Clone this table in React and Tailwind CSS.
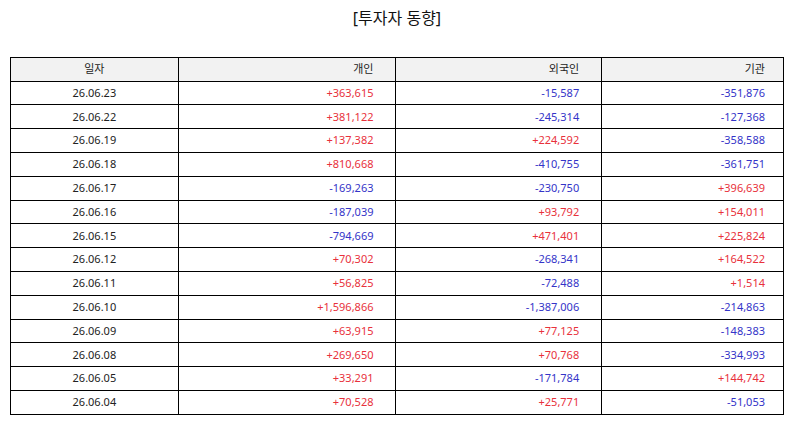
import React from "react";

const rows = [
  ["26.06.23", "+363,615", "-15,587", "-351,876"],
  ["26.06.22", "+381,122", "-245,314", "-127,368"],
  ["26.06.19", "+137,382", "+224,592", "-358,588"],
  ["26.06.18", "+810,668", "-410,755", "-361,751"],
  ["26.06.17", "-169,263", "-230,750", "+396,639"],
  ["26.06.16", "-187,039", "+93,792", "+154,011"],
  ["26.06.15", "-794,669", "+471,401", "+225,824"],
  ["26.06.12", "+70,302", "-268,341", "+164,522"],
  ["26.06.11", "+56,825", "-72,488", "+1,514"],
  ["26.06.10", "+1,596,866", "-1,387,006", "-214,863"],
  ["26.06.09", "+63,915", "+77,125", "-148,383"],
  ["26.06.08", "+269,650", "+70,768", "-334,993"],
  ["26.06.05", "+33,291", "-171,784", "+144,742"],
  ["26.06.04", "+70,528", "+25,771", "-51,053"],
];

const tone = (v) => (v.startsWith("+") ? "text-[#e8313b]" : "text-[#3434c8]");

const App = () => {
  return (
    <div
      className="w-[794px] h-[425px] bg-white"
      style={{ fontFamily: '"Noto Sans", "Noto Sans CJK KR", sans-serif' }}
    >
      <h1 className="pt-[6px] text-center text-[16px] leading-[24px] text-[#111]">
        [투자자 동향]
      </h1>

      <table className="mt-[27px] ml-[10px] w-[774px] border-collapse text-[11px] text-[#222]">
        <colgroup>
          <col className="w-[168px]" />
          <col className="w-[218px]" />
          <col className="w-[206px]" />
          <col className="w-[182px]" />
        </colgroup>
        <thead>
          <tr className="h-[23.6px] bg-[#f2f2f2]">
            <th className="border-[1.5px] border-black p-0 font-normal text-center">일자</th>
            <th className="border-[1.5px] border-black p-0 font-normal text-right pr-[22px]">개인</th>
            <th className="border-[1.5px] border-black p-0 font-normal text-right pr-[22px]">외국인</th>
            <th className="border-[1.5px] border-black p-0 font-normal text-right pr-[18px]">기관</th>
          </tr>
        </thead>
        <tbody>
          {rows.map((r) => (
            <tr key={r[0]} className="h-[23.8px]">
              <td className="border-[1.5px] border-black p-0 text-center">{r[0]}</td>
              <td className={`border-[1.5px] border-black p-0 text-right pr-[22px] ${tone(r[1])}`}>{r[1]}</td>
              <td className={`border-[1.5px] border-black p-0 text-right pr-[22px] ${tone(r[2])}`}>{r[2]}</td>
              <td className={`border-[1.5px] border-black p-0 text-right pr-[18px] ${tone(r[3])}`}>{r[3]}</td>
            </tr>
          ))}
        </tbody>
      </table>
    </div>
  );
};

export default App;
